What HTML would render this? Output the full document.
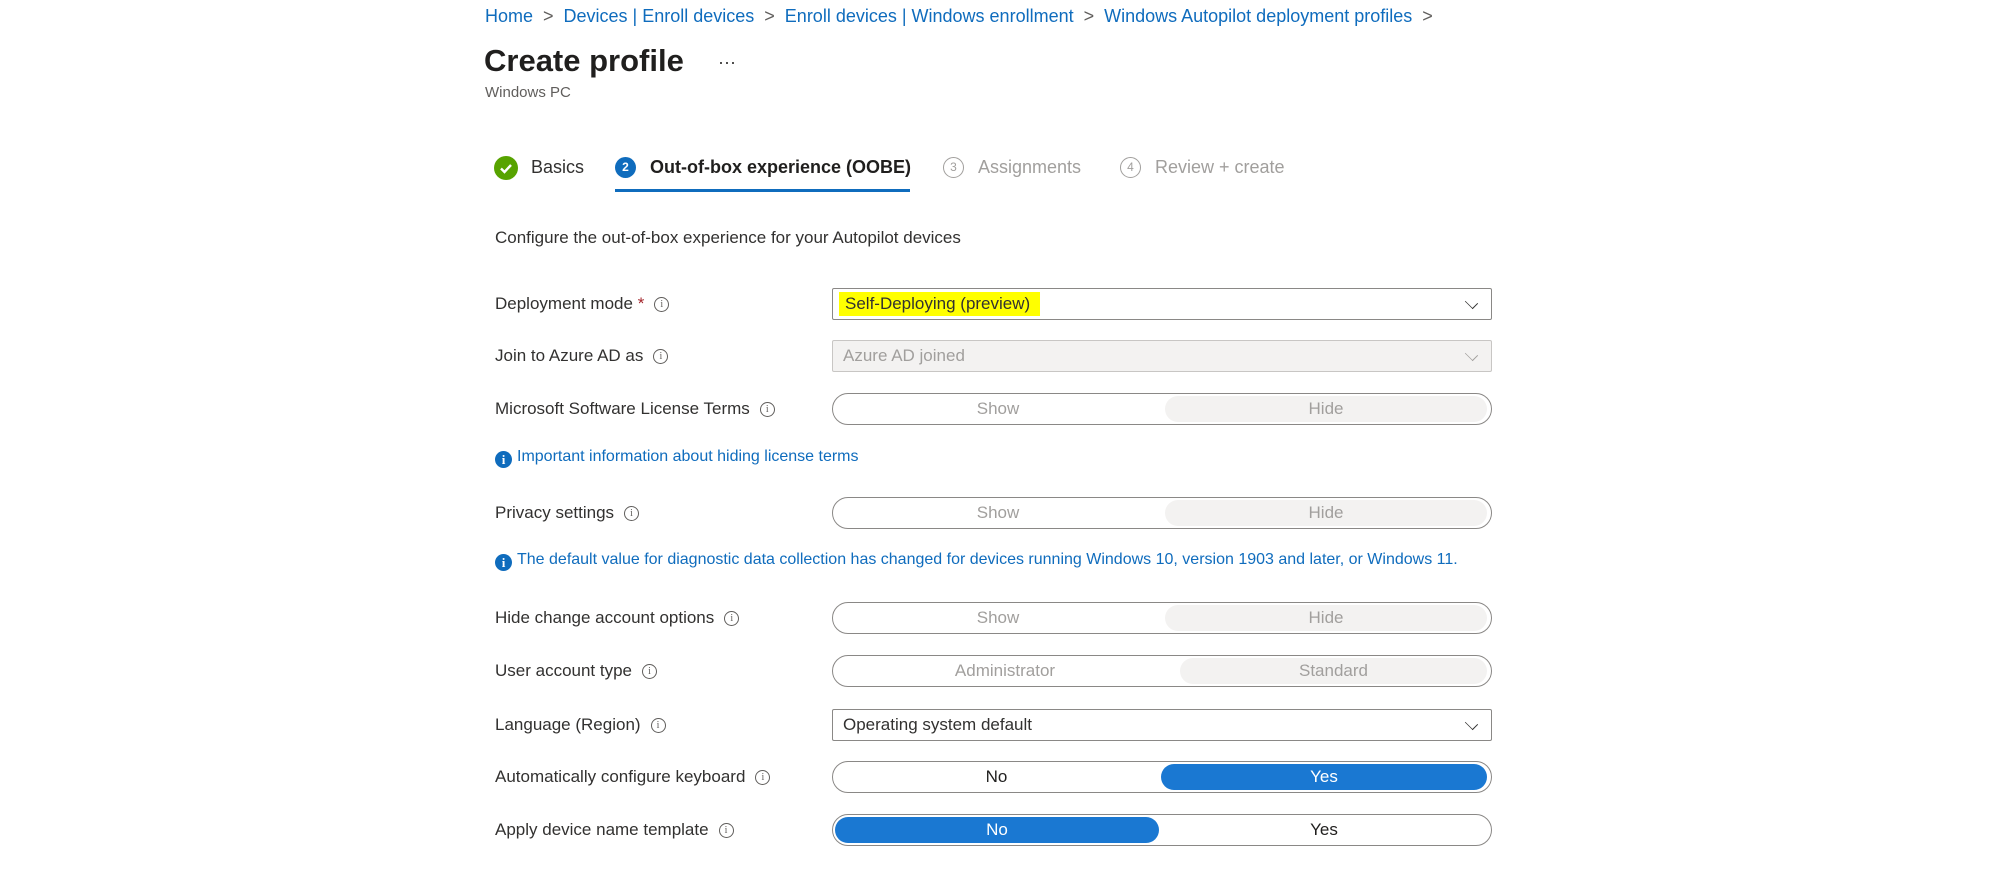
<!DOCTYPE html>
<html><head><meta charset="utf-8"><style>
*{box-sizing:border-box;margin:0;padding:0}
body{width:2000px;height:879px;background:#fff;font-family:"Liberation Sans",sans-serif;color:#323130;position:relative;overflow:hidden}
.a{position:absolute;white-space:nowrap}
.bc{top:6px;left:485px;font-size:18px;color:#0f6cbd}
.bc .s{color:#605e5c;margin:0 10px}
.lbl{left:495px;font-size:17px;color:#323130;transform:translateY(-50%)}
.i{display:inline-block;width:15px;height:15px;border:1px solid #605e5c;border-radius:50%;font-size:10px;text-align:center;line-height:13px;vertical-align:middle;margin-left:10px;color:#605e5c;font-family:"Liberation Serif",serif}
.ctl{left:832px;width:660px;height:32px;border:1px solid #8a8886;font-size:17px}
.dd{border-radius:2px;padding-left:10px;line-height:30px}
.dd .chev{position:absolute;right:14px;top:8px;width:11px;height:11px;border-right:1.5px solid #323130;border-bottom:1.5px solid #323130;transform:rotate(45deg) scale(1,0.7)}
.tg{border-radius:16px;overflow:hidden}
.seg{position:absolute;top:2px;height:26px;border-radius:13px;text-align:center;line-height:26px;font-size:17px}
.info{left:495px;font-size:16px;color:#0f6cbd;transform:translateY(-50%)}
.info b{display:inline-block;width:17px;height:17px;border-radius:50%;background:#0f6cbd;color:#fff;font-size:13px;line-height:17px;text-align:center;margin-right:5px;vertical-align:-3px;font-family:"Liberation Serif",serif}
</style></head><body>
<div class="a bc">Home<span class="s">&gt;</span>Devices | Enroll devices<span class="s">&gt;</span>Enroll devices | Windows enrollment<span class="s">&gt;</span>Windows Autopilot deployment profiles<span class="s">&gt;</span></div>
<div class="a" style="top:43px;left:484px;font-size:31px;color:#201f1e;font-weight:600">Create profile</div>
<div class="a" style="top:52px;left:718px;font-size:18px;color:#323130">···</div>
<div class="a" style="top:84px;left:485px;font-size:15px;color:#605e5c">Windows PC</div>

<div class="a" style="top:156px;left:494px;width:24px;height:24px;border-radius:50%;background:#57a300"><svg width="24" height="24"><path d="M7 12.5l3.5 3.5 6.5-7" stroke="#fff" stroke-width="2.4" fill="none"/></svg></div>
<div class="a" style="top:157px;left:531px;font-size:18px">Basics</div>
<div class="a" style="top:157px;left:615px;width:21px;height:21px;border-radius:50%;background:#0f6cbd;color:#fff;font-size:12px;text-align:center;line-height:21px;font-weight:bold">2</div>
<div class="a" style="top:157px;left:650px;font-size:18px;color:#201f1e;font-weight:600">Out-of-box experience (OOBE)</div>
<div class="a" style="top:189px;left:615px;width:295px;height:3px;background:#0f6cbd"></div>
<div class="a" style="top:157px;left:943px;width:21px;height:21px;border-radius:50%;border:1px solid #a19f9d;color:#a19f9d;font-size:12px;text-align:center;line-height:19px">3</div>
<div class="a" style="top:157px;left:978px;font-size:18px;color:#a19f9d">Assignments</div>
<div class="a" style="top:157px;left:1120px;width:21px;height:21px;border-radius:50%;border:1px solid #a19f9d;color:#a19f9d;font-size:12px;text-align:center;line-height:19px">4</div>
<div class="a" style="top:157px;left:1155px;font-size:18px;color:#a19f9d">Review + create</div>

<div class="a" style="top:228px;left:495px;font-size:17px">Configure the out-of-box experience for your Autopilot devices</div>

<div class="a lbl" style="top:304px">Deployment mode <span style="color:#a4262c">*</span><span class="i">i</span></div>
<div class="a ctl dd" style="top:288px"><span style="background:#ffff00;padding:2px 10px 3px 6px;margin-left:-4px">Self-Deploying (preview)</span><div class="chev"></div></div>

<div class="a lbl" style="top:356px">Join to Azure AD as<span class="i">i</span></div>
<div class="a ctl dd" style="top:340px;background:#f3f2f1;border-color:#c8c6c4;color:#a19f9d">Azure AD joined<div class="chev" style="border-color:#a19f9d"></div></div>

<div class="a lbl" style="top:409px">Microsoft Software License Terms<span class="i">i</span></div>
<div class="a ctl tg" style="top:393px"><div class="seg" style="left:2px;width:326px;color:#a19f9d">Show</div><div class="seg" style="left:332px;width:322px;background:#f3f2f1;color:#a19f9d">Hide</div></div>
<div class="a info" style="top:458px"><b>i</b>Important information about hiding license terms</div>

<div class="a lbl" style="top:513px">Privacy settings<span class="i">i</span></div>
<div class="a ctl tg" style="top:497px"><div class="seg" style="left:2px;width:326px;color:#a19f9d">Show</div><div class="seg" style="left:332px;width:322px;background:#f3f2f1;color:#a19f9d">Hide</div></div>
<div class="a info" style="top:561px"><b>i</b>The default value for diagnostic data collection has changed for devices running Windows 10, version 1903 and later, or Windows 11.</div>

<div class="a lbl" style="top:618px">Hide change account options<span class="i">i</span></div>
<div class="a ctl tg" style="top:602px"><div class="seg" style="left:2px;width:326px;color:#a19f9d">Show</div><div class="seg" style="left:332px;width:322px;background:#f3f2f1;color:#a19f9d">Hide</div></div>

<div class="a lbl" style="top:671px">User account type<span class="i">i</span></div>
<div class="a ctl tg" style="top:655px"><div class="seg" style="left:2px;width:340px;color:#a19f9d">Administrator</div><div class="seg" style="left:347px;width:307px;background:#f3f2f1;color:#a19f9d">Standard</div></div>

<div class="a lbl" style="top:725px">Language (Region)<span class="i">i</span></div>
<div class="a ctl dd" style="top:709px">Operating system default<div class="chev"></div></div>

<div class="a lbl" style="top:777px">Automatically configure keyboard<span class="i">i</span></div>
<div class="a ctl tg" style="top:761px"><div class="seg" style="left:2px;width:323px;color:#201f1e">No</div><div class="seg" style="left:328px;width:326px;background:#1a78d2;color:#fff">Yes</div></div>

<div class="a lbl" style="top:830px">Apply device name template<span class="i">i</span></div>
<div class="a ctl tg" style="top:814px"><div class="seg" style="left:2px;width:324px;background:#1a78d2;color:#fff">No</div><div class="seg" style="left:328px;width:326px;color:#201f1e">Yes</div></div>
</body></html>
